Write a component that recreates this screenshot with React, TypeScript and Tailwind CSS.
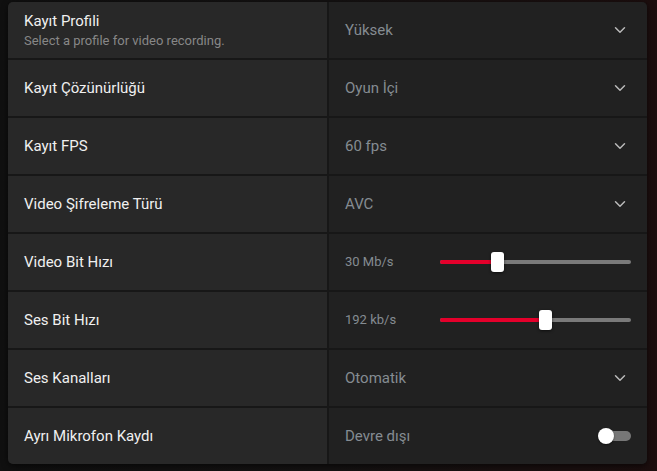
import { ChevronDown } from "lucide-react";

type Row = {
  label: string;
  hint?: string;
  kind: "select" | "slider" | "toggle";
  value: string;
  pct?: number;
};

const rows: Row[] = [
  { label: "Kayıt Profili", hint: "Select a profile for video recording.", kind: "select", value: "Yüksek" },
  { label: "Kayıt Çözünürlüğü", kind: "select", value: "Oyun İçi" },
  { label: "Kayıt FPS", kind: "select", value: "60 fps" },
  { label: "Video Şifreleme Türü", kind: "select", value: "AVC" },
  { label: "Video Bit Hızı", kind: "slider", value: "30 Mb/s", pct: 30 },
  { label: "Ses Bit Hızı", kind: "slider", value: "192 kb/s", pct: 55 },
  { label: "Ses Kanalları", kind: "select", value: "Otomatik" },
  { label: "Ayrı Mikrofon Kaydı", kind: "toggle", value: "Devre dışı" },
];

function Slider({ pct }: { pct: number }) {
  return (
    <div className="relative h-[20px] w-[191px] ml-auto mr-[16px]">
      <div className="absolute left-0 right-0 top-[8px] h-[4px] rounded-full bg-[#7a7a7a]" />
      <div
        className="absolute left-0 top-[8px] h-[4px] rounded-l-full bg-[#e4002b]"
        style={{ width: `${pct}%` }}
      />
      <div
        className="absolute top-0 h-[20px] w-[13px] -ml-[6px] rounded-[3px] bg-white shadow-[0_1px_3px_rgba(0,0,0,0.6)]"
        style={{ left: `${pct}%` }}
      />
    </div>
  );
}

function Toggle() {
  return (
    <div className="relative ml-auto mr-[16px] h-[16px] w-[33px]">
      <div className="absolute left-[2px] right-0 top-[3px] h-[10px] rounded-full bg-[#777777]" />
      <div className="absolute left-0 top-0 h-[16px] w-[16px] rounded-full bg-white shadow-[0_1px_2px_rgba(0,0,0,0.5)]" />
    </div>
  );
}

export default function App() {
  return (
    <div
      className="h-[471px] w-[657px] bg-gradient-to-r from-[#101010] via-[#141212] to-[#1c0e0e] pt-[2px] pl-[8px] pr-[10px]"
      style={{ fontFamily: 'Roboto, "Noto Sans", sans-serif' }}
    >
      <div className="flex flex-col gap-[2px] overflow-hidden rounded-[5px] bg-[#171717] shadow-[0_2px_6px_rgba(0,0,0,0.6)]">
        {rows.map((r) => (
          <div key={r.label} className="flex h-[56px] gap-[2px]">
            <div className="flex w-[319px] flex-col justify-center bg-[#282828] pl-[16px]">
              <div className="text-[15px] leading-[18px] text-[#f0f0f0]">{r.label}</div>
              {r.hint && <div className="mt-[4px] text-[13px] leading-[14px] text-[#878787]">{r.hint}</div>}
            </div>
            <div className="flex flex-1 items-center bg-[#212121] pl-[16px]">
              <span className={`${r.kind === "slider" ? "text-[13px]" : "text-[15px]"} text-[#858c92]`}>{r.value}</span>
              {r.kind === "select" && (
                <ChevronDown className="ml-auto mr-[18px] h-[18px] w-[18px] text-[#b8b8b8]" strokeWidth={2} />
              )}
              {r.kind === "slider" && <Slider pct={r.pct ?? 0} />}
              {r.kind === "toggle" && <Toggle />}
            </div>
          </div>
        ))}
      </div>
    </div>
  );
}
